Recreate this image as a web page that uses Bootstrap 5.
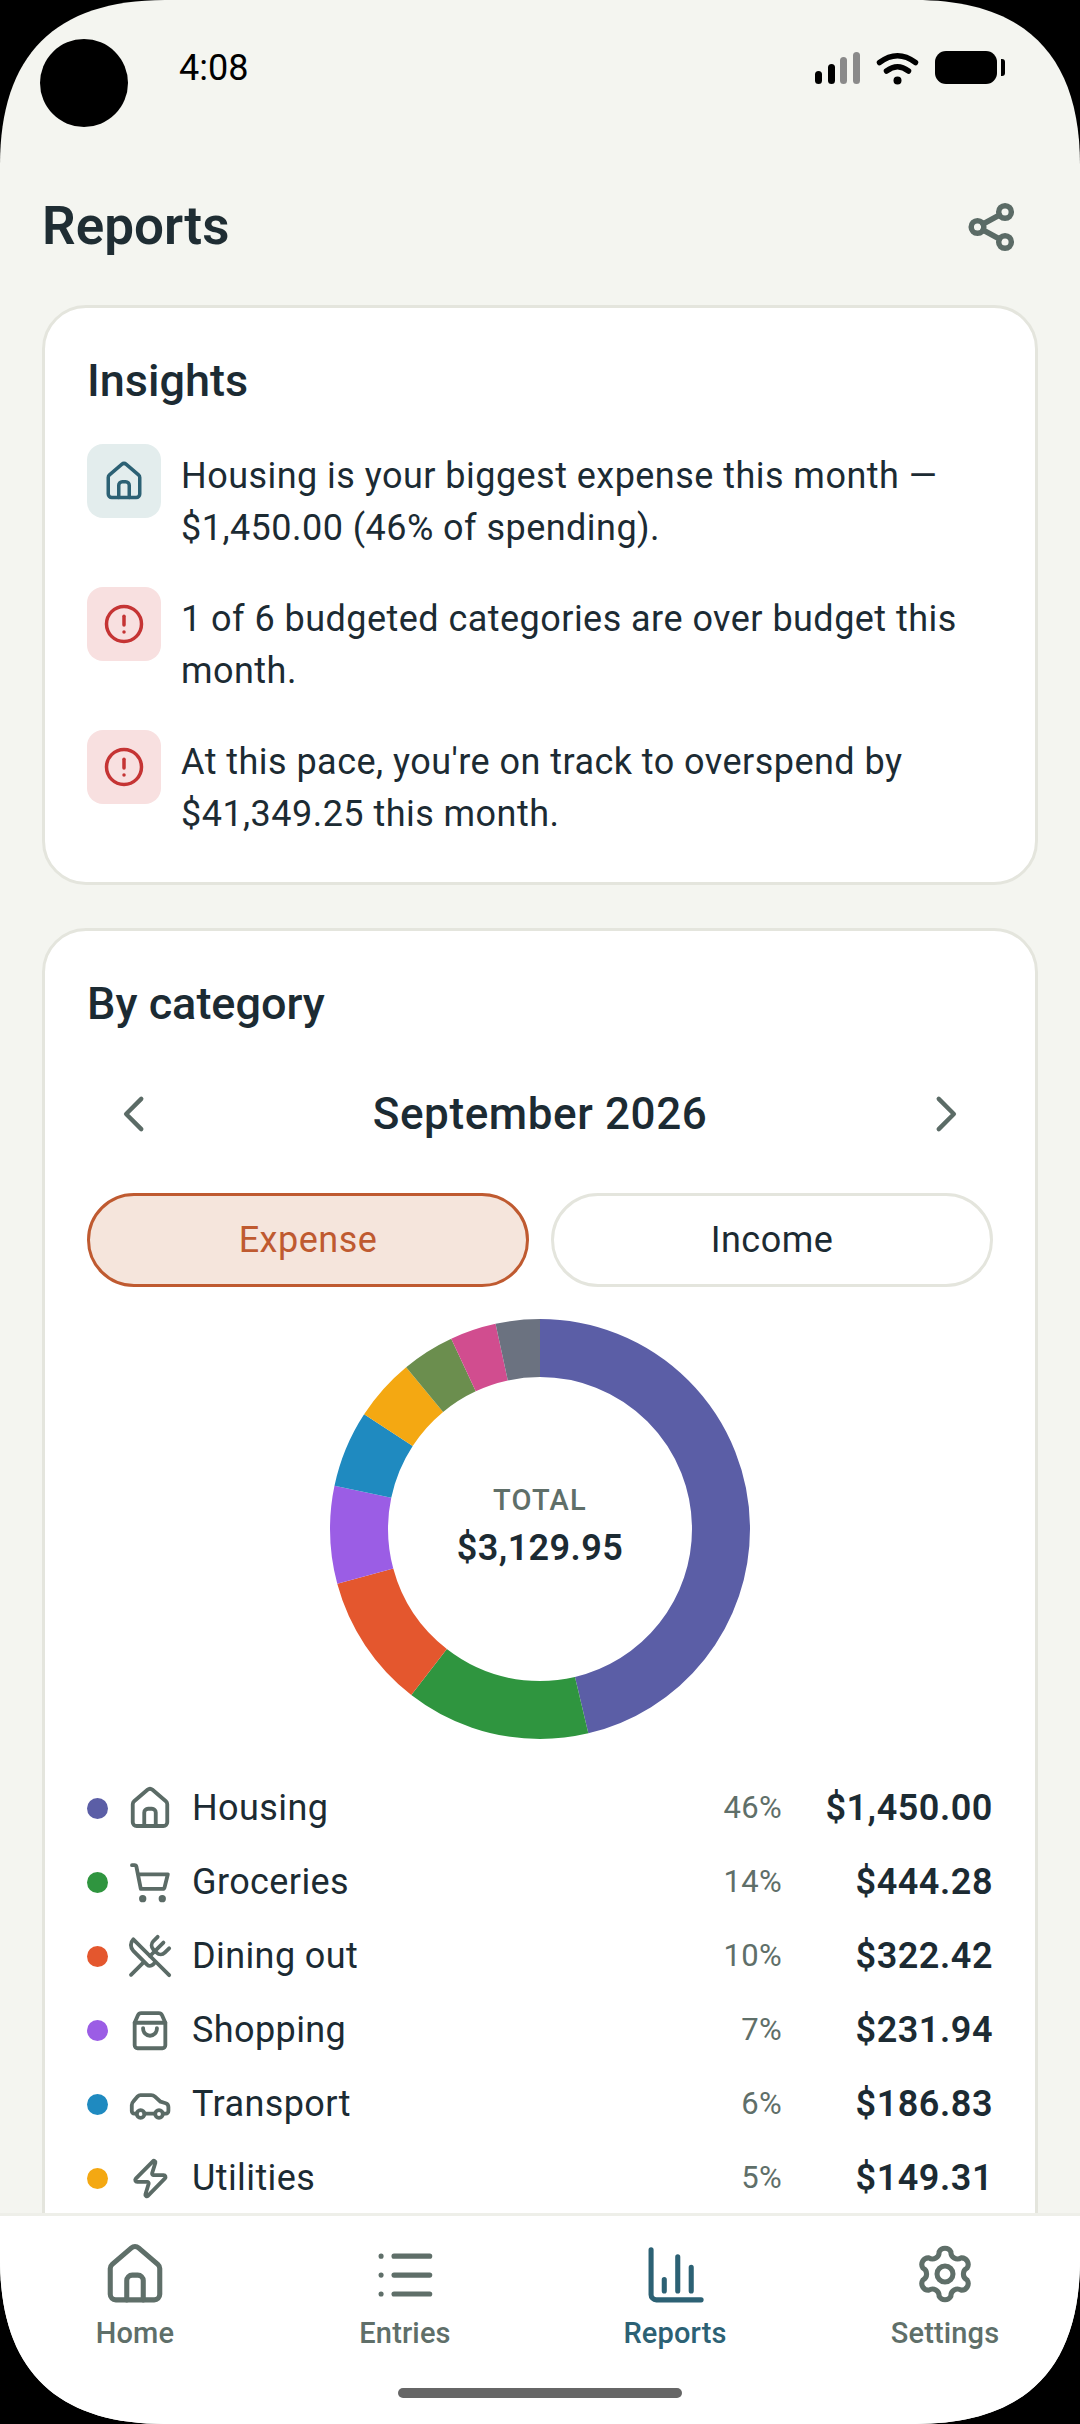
<!DOCTYPE html>
<html lang="en">

<head>
    <title>Reports</title>
    <meta charset="utf-8">
    <link rel="stylesheet" href="https://cdn.jsdelivr.net/npm/bootstrap@5.3.0/dist/css/bootstrap.min.css">
    <style>
        html, body { margin: 0; background: #000; }
        body { font-family: Roboto, "Liberation Sans", sans-serif; color: #1c2b33; }
        .phone { width: 1080px; height: 2424px; overflow: hidden; background: #f4f5f0;
            clip-path: path("M165 0H915C1025 0 1080 55 1080 165V2259C1080 2369 1025 2424 915 2424H165C55 2424 0 2369 0 2259V165C0 55 55 0 165 0Z"); }
        .cam { left: 40px; top: 39px; width: 88px; height: 88px; background: #000; }

        .status-row { height: 134px; padding: 1px 75px 0 179px; color: #000; font-size: 36px; }
        .sig-bar { width: 7px; background: #000; border-radius: 4px; }
        .sig-bar.off { background: #8a8a8a; }
        .sig-1 { height: 13px; } .sig-2 { height: 20px; } .sig-3 { height: 27px; } .sig-4 { height: 32px; }
        .signal { height: 32px; gap: 5.6px; margin-right: 16px; }
        .batt { width: 62px; height: 33px; background: #000; border-radius: 11px; margin-left: 15px; }
        .batt-nub { width: 4px; height: 17px; background: #000; border-radius: 0 3px 3px 0; margin-left: 4px; }

        .page-head { height: 171px; padding: 15px 44px 0 42px; }
        .page-title { font-size: 53px; font-weight: 600; margin: 0; color: #1f2d33; }
        .share-ico { width: 66px; height: 66px; color: #5b6b66; margin-right: 12px; stroke-width: 1.6; }

        .scroller { min-height: 0; padding: 0 42px; }
        .panel { border: 3px solid #e4e5dd; border-radius: 44px; background: #fff; --bs-card-bg: #fff; }
        .panel-body { padding: 43px 42px 42px; }
        .panel + .panel { margin-top: 43px; }
        .panel-title { font-size: 45px; line-height: 60px; font-weight: 500; margin: 0; }

        .ico { fill: none; stroke: currentColor; stroke-width: 2; stroke-linecap: round; stroke-linejoin: round; }
        .insights { margin-top: 33px; gap: 33px; }
        .tile { width: 74px; height: 74px; border-radius: 16px; }
        .tile svg { width: 42px; height: 42px; }
        .tile-info { background: #e3eded; color: #2c6174; }
        .tile-warn { background: #f8e0e0; color: #c53434; }
        .insight-text { font-size: 36px; line-height: 52px; letter-spacing: .46px; padding-top: 6px; margin-left: 20px; }

        .month-row { height: 90px; margin-top: 35px; padding: 0 13px; }
        .month-row svg { width: 66px; height: 66px; color: #5b6b66; stroke-width: 1.6; }
        .month-name { font-size: 44px; font-weight: 500; letter-spacing: .6px; }
        .toggle-row { margin-top: 34px; gap: 22px; }
        .toggle-btn { flex: 1 1 0; height: 94px; border-radius: 47px; font-size: 36px; letter-spacing: .5px; border: 3px solid #e4e5dd; color: #1c2b33; background: #fff; }
        .toggle-btn.picked { background: #f5e5dc; border-color: #bf5a30; color: #bf5a30; }

        .donut-wrap { width: 420px; height: 420px; margin: 32px auto 0; }
        .donut-wrap svg { width: 420px; height: 420px; display: block; }
        .donut-mid { padding-bottom: 3px; }
        .donut-label { font-size: 29px; line-height: 40px; font-weight: 500; letter-spacing: 1.2px; color: #5f6f69; }
        .donut-sum { font-size: 36px; line-height: 56px; font-weight: 600; letter-spacing: .4px; }

        .legend { margin-top: 32px; padding-bottom: 60px; }
        .leg-row { height: 74px; font-size: 36px; letter-spacing: .4px; }
        .leg-dot { width: 21px; height: 21px; border-radius: 50%; flex: none; }
        .leg-row svg { width: 46px; height: 46px; color: #5b6b66; margin-left: 19px; flex: none; }
        .leg-name { margin-left: 19px; }
        .leg-pct { font-size: 31px; letter-spacing: .3px; color: #5f6f69; }
        .leg-amt { width: 211px; text-align: right; font-weight: 600; letter-spacing: .55px; flex: none; }
        .c-housing { background: #5b5ea6; } .c-groc { background: #2f953f; } .c-dining { background: #e4572e; }
        .c-shop { background: #9b5de5; } .c-trans { background: #1f8ac0; } .c-util { background: #f4a812; }

        .tabbar { height: 211px; background: #fff; border-top: 3px solid #eeefe9; padding-top: 25px; }
        .tab-item { color: #5f6f69; font-size: 29px; line-height: 40px; font-weight: 500; letter-spacing: .15px; width: 270px; }
        .tab-item svg { width: 66px; height: 66px; stroke-width: 1.85; margin-bottom: 6px; }
        .tab-item.on { color: #2c6174; }
        .home-bar { width: 284px; height: 10px; border-radius: 5px; background: #666; margin: 35px auto 0; }
    </style>
</head>

<body>
    <svg class="d-none" xmlns="http://www.w3.org/2000/svg">
        <symbol id="i-home" viewBox="0 0 24 24">
            <path d="M3 10a2 2 0 0 1 .7-1.5l7-6a2 2 0 0 1 2.6 0l7 6A2 2 0 0 1 21 10v9.4a2 2 0 0 1-2 2H5a2 2 0 0 1-2-2z"/>
            <path d="M9 21.4v-7a2 2 0 0 1 2-2h2a2 2 0 0 1 2 2v7"/>
        </symbol>
        <symbol id="i-alert" viewBox="0 0 24 24">
            <circle cx="12" cy="12" r="10"/>
            <path d="M12 7.5v5"/>
            <path d="M12 16.5h.01"/>
        </symbol>
        <symbol id="i-cart" viewBox="0 0 24 24">
            <circle cx="8.2" cy="20.7" r=".9"/>
            <circle cx="18.4" cy="20.7" r=".9"/>
            <path d="M2.6 3.2h1.3a1 1 0 0 1 1 .8l2.3 11.6h11.4a1 1 0 0 0 1-.8L21.3 8H5.8"/>
        </symbol>
        <symbol id="i-dining" viewBox="0 0 24 24">
            <path d="m16 2-2.3 2.3a3 3 0 0 0 0 4.2l1.8 1.8a3 3 0 0 0 4.2 0L22 8"/>
            <path d="M15 15 3.3 3.3a4.2 4.2 0 0 0 0 6l7.3 7.3c.7.7 2 .7 2.8 0L15 15Zm0 0 7 7"/>
            <path d="m2.1 21.8 6.4-6.3"/>
            <path d="m19 5-7 7"/>
        </symbol>
        <symbol id="i-bag" viewBox="0 0 24 24">
            <path d="M4 20V8.2l1.7-3.9A2 2 0 0 1 7.4 3.2h9.2a2 2 0 0 1 1.7 1.1L20 8.2V20a1.5 1.5 0 0 1-1.5 1.5h-13A1.5 1.5 0 0 1 4 20Z"/>
            <path d="M4 8.2h16"/>
            <path d="M8.4 11v.4a3.6 3.6 0 0 0 7.2 0V11"/>
        </symbol>
        <symbol id="i-car" viewBox="0 0 24 24">
            <path d="M5 17H3.8a1.3 1.3 0 0 1-1.3-1.3v-3.2c0-.7.3-1.3.8-1.8L5.6 8a2 2 0 0 1 1.5-.6h5.5a3 3 0 0 1 2 .8l2.9 2.6 2.7.8c.9.3 1.4 1 1.4 2v2.1a1.3 1.3 0 0 1-1.3 1.3H19"/>
            <path d="M9.1 17h5.5"/>
            <circle cx="7.1" cy="17.2" r="2"/>
            <circle cx="16.7" cy="17.2" r="2"/>
        </symbol>
        <symbol id="i-zap" viewBox="0 0 24 24">
            <path d="M5.300 14a1 1 0 0 1-.7-1.700l8.900-9c.6-.6 1.500 0 1.300.7l-1.700 5.500a.8.8 0 0 0 .8 1h5.200a1 1 0 0 1 .7 1.700l-8.900 9.100c-.6.6-1.500 0-1.300-.7l1.700-5.600a.8.8 0 0 0-.8-1z"/>
        </symbol>
    </svg>

    <div class="phone position-relative d-flex flex-column">
        <div class="cam position-absolute rounded-circle"></div>

        <div class="status-row d-flex align-items-center justify-content-between flex-shrink-0">
            <span>4:08</span>
            <div class="d-flex align-items-center">
                <div class="signal d-flex align-items-end">
                    <span class="sig-bar sig-1"></span>
                    <span class="sig-bar sig-2"></span>
                    <span class="sig-bar sig-3 off"></span>
                    <span class="sig-bar sig-4 off"></span>
                </div>
                <svg width="44" height="34" viewBox="0 0 44 34" fill="none" stroke="#000" stroke-width="5.5" stroke-linecap="round">
                    <path d="M3.500 11.500Q21.500 -2 39.500 11.500"/>
                    <path d="M10.500 20Q21.500 11.500 32.500 20"/>
                    <circle cx="21.500" cy="29.500" r="4" fill="#000" stroke="none"/>
                </svg>
                <span class="batt d-block"></span>
                <span class="batt-nub d-block"></span>
            </div>
        </div>

        <header class="page-head d-flex align-items-center justify-content-between flex-shrink-0">
            <h1 class="page-title">Reports</h1>
            <svg class="share-ico ico" viewBox="0 0 24 24">
                <circle cx="17.100" cy="6.550" r="2.300"/>
                <circle cx="7.100" cy="12" r="2.300"/>
                <circle cx="17.100" cy="17.450" r="2.300"/>
                <path d="m9.100 10.900 6-3.250"/>
                <path d="m9.100 13.100 6 3.250"/>
            </svg>
        </header>

        <main class="scroller flex-grow-1 overflow-hidden">
            <section class="card panel">
                <div class="card-body panel-body">
                    <h2 class="panel-title">Insights</h2>
                    <div class="insights d-flex flex-column">
                        <div class="d-flex align-items-start">
                            <div class="tile tile-info d-flex align-items-center justify-content-center flex-shrink-0">
                                <svg class="ico"><use href="#i-home"/></svg>
                            </div>
                            <div class="insight-text">Housing is your biggest expense this month — $1,450.00 (46% of spending).</div>
                        </div>
                        <div class="d-flex align-items-start">
                            <div class="tile tile-warn d-flex align-items-center justify-content-center flex-shrink-0">
                                <svg class="ico"><use href="#i-alert"/></svg>
                            </div>
                            <div class="insight-text">1 of 6 budgeted categories are over budget this month.</div>
                        </div>
                        <div class="d-flex align-items-start">
                            <div class="tile tile-warn d-flex align-items-center justify-content-center flex-shrink-0">
                                <svg class="ico"><use href="#i-alert"/></svg>
                            </div>
                            <div class="insight-text">At this pace, you're on track to overspend by $41,349.25 this month.</div>
                        </div>
                    </div>
                </div>
            </section>

            <section class="card panel">
                <div class="card-body panel-body">
                    <h2 class="panel-title">By category</h2>

                    <div class="month-row d-flex align-items-center justify-content-between">
                        <svg class="ico" viewBox="0 0 24 24"><path d="M15 6.500 9.500 12l5.500 5.500"/></svg>
                        <span class="month-name">September 2026</span>
                        <svg class="ico" viewBox="0 0 24 24"><path d="m9 6.500 5.500 5.500L9 17.500"/></svg>
                    </div>

                    <div class="toggle-row d-flex">
                        <button type="button" class="btn toggle-btn picked">Expense</button>
                        <button type="button" class="btn toggle-btn">Income</button>
                    </div>

                    <div class="donut-wrap position-relative">
                        <svg viewBox="0 0 420 420" fill="none" stroke-width="58">
                            <g transform="rotate(-90 210 210)">
                                <circle cx="210" cy="210" r="181" pathLength="100" stroke="#5b5ea6" stroke-dasharray="46.3 100" stroke-dashoffset="0"/>
                                <circle cx="210" cy="210" r="181" pathLength="100" stroke="#2f953f" stroke-dasharray="14.2 100" stroke-dashoffset="-46.3"/>
                                <circle cx="210" cy="210" r="181" pathLength="100" stroke="#e4572e" stroke-dasharray="10.3 100" stroke-dashoffset="-60.5"/>
                                <circle cx="210" cy="210" r="181" pathLength="100" stroke="#9b5de5" stroke-dasharray="7.5 100" stroke-dashoffset="-70.8"/>
                                <circle cx="210" cy="210" r="181" pathLength="100" stroke="#1f8ac0" stroke-dasharray="5.9 100" stroke-dashoffset="-78.3"/>
                                <circle cx="210" cy="210" r="181" pathLength="100" stroke="#f4a812" stroke-dasharray="4.8 100" stroke-dashoffset="-84.2"/>
                                <circle cx="210" cy="210" r="181" pathLength="100" stroke="#6b8e4e" stroke-dasharray="4.05 100" stroke-dashoffset="-89"/>
                                <circle cx="210" cy="210" r="181" pathLength="100" stroke="#d14d8f" stroke-dasharray="3.55 100" stroke-dashoffset="-93.05"/>
                                <circle cx="210" cy="210" r="181" pathLength="100" stroke="#6b7280" stroke-dasharray="3.4 100" stroke-dashoffset="-96.6"/>
                            </g>
                        </svg>
                        <div class="donut-mid position-absolute top-0 start-0 w-100 h-100 d-flex flex-column align-items-center justify-content-center">
                            <span class="donut-label">TOTAL</span>
                            <span class="donut-sum">$3,129.95</span>
                        </div>
                    </div>

                    <div class="legend">
                        <div class="leg-row d-flex align-items-center">
                            <span class="leg-dot c-housing"></span>
                            <svg class="ico"><use href="#i-home"/></svg>
                            <span class="leg-name flex-grow-1">Housing</span>
                            <span class="leg-pct">46%</span>
                            <span class="leg-amt">$1,450.00</span>
                        </div>
                        <div class="leg-row d-flex align-items-center">
                            <span class="leg-dot c-groc"></span>
                            <svg class="ico"><use href="#i-cart"/></svg>
                            <span class="leg-name flex-grow-1">Groceries</span>
                            <span class="leg-pct">14%</span>
                            <span class="leg-amt">$444.28</span>
                        </div>
                        <div class="leg-row d-flex align-items-center">
                            <span class="leg-dot c-dining"></span>
                            <svg class="ico"><use href="#i-dining"/></svg>
                            <span class="leg-name flex-grow-1">Dining out</span>
                            <span class="leg-pct">10%</span>
                            <span class="leg-amt">$322.42</span>
                        </div>
                        <div class="leg-row d-flex align-items-center">
                            <span class="leg-dot c-shop"></span>
                            <svg class="ico"><use href="#i-bag"/></svg>
                            <span class="leg-name flex-grow-1">Shopping</span>
                            <span class="leg-pct">7%</span>
                            <span class="leg-amt">$231.94</span>
                        </div>
                        <div class="leg-row d-flex align-items-center">
                            <span class="leg-dot c-trans"></span>
                            <svg class="ico"><use href="#i-car"/></svg>
                            <span class="leg-name flex-grow-1">Transport</span>
                            <span class="leg-pct">6%</span>
                            <span class="leg-amt">$186.83</span>
                        </div>
                        <div class="leg-row d-flex align-items-center">
                            <span class="leg-dot c-util"></span>
                            <svg class="ico"><use href="#i-zap"/></svg>
                            <span class="leg-name flex-grow-1">Utilities</span>
                            <span class="leg-pct">5%</span>
                            <span class="leg-amt">$149.31</span>
                        </div>
                    </div>
                </div>
            </section>
        </main>

        <footer class="tabbar flex-shrink-0">
            <div class="d-flex">
                <div class="tab-item d-flex flex-column align-items-center">
                    <svg class="ico"><use href="#i-home"/></svg>
                    <span>Home</span>
                </div>
                <div class="tab-item d-flex flex-column align-items-center">
                    <svg class="ico" viewBox="0 0 24 24">
                        <path d="M3.300 5.500h.01M3.300 12.400h.01M3.300 19.300h.01"/>
                        <path d="M8 5.500h13M8 12.400h13M8 19.300h13"/>
                    </svg>
                    <span>Entries</span>
                </div>
                <div class="tab-item on d-flex flex-column align-items-center">
                    <svg class="ico" viewBox="0 0 24 24">
                        <path d="M3.300 3.200V19.500a1.900 1.900 0 0 0 1.900 1.900h16.300"/>
                        <path d="M8.100 14v4.200M13 5.700v12.500M17.900 9.600v8.600"/>
                    </svg>
                    <span>Reports</span>
                </div>
                <div class="tab-item d-flex flex-column align-items-center">
                    <svg class="ico" viewBox="0 0 24 24">
                        <path d="M14.150 3.980A2.400 2.400 0 0 0 9.850 3.980 2.400 2.400 0 0 1 6.130 6.130 2.400 2.400 0 0 0 3.980 9.850 2.400 2.400 0 0 1 3.980 14.150 2.400 2.400 0 0 0 6.130 17.870 2.400 2.400 0 0 1 9.850 20.020 2.400 2.400 0 0 0 14.150 20.020 2.400 2.400 0 0 1 17.870 17.870 2.400 2.400 0 0 0 20.020 14.150 2.400 2.400 0 0 1 20.020 9.850 2.400 2.400 0 0 0 17.870 6.130 2.400 2.400 0 0 1 14.150 3.980Z"/>
                        <circle cx="12" cy="12" r="2.900"/>
                    </svg>
                    <span>Settings</span>
                </div>
            </div>
            <div class="home-bar"></div>
        </footer>
    </div>

    <script src="https://cdn.jsdelivr.net/npm/bootstrap@5.3.0/dist/js/bootstrap.bundle.min.js"></script>
</body>

</html>
